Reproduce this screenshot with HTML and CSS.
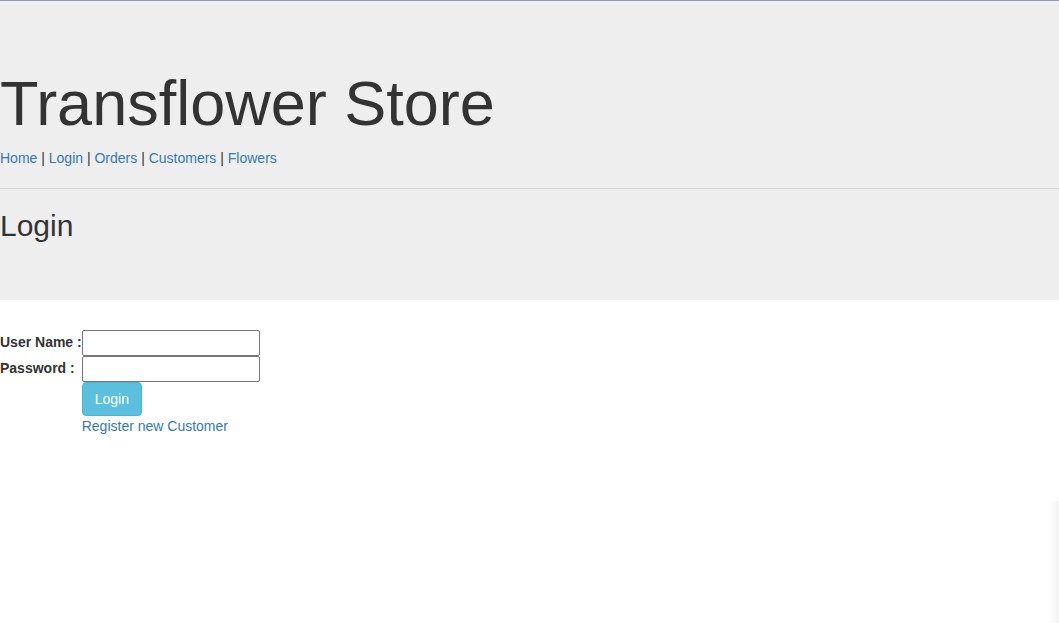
FILE: index.html
```html
<!DOCTYPE html>
<html>
<head>
<meta charset="utf-8">
<title>Transflower Store</title>
<link rel="stylesheet" href="styles.css">
</head>
<body>
<div class="jumbotron">
  <h1 class="title">Transflower Store</h1>
  <p class="nav">
    <a href="#">Home</a> | <a href="#">Login</a> | <a href="#">Orders</a> | <a href="#">Customers</a> | <a href="#">Flowers</a>
  </p>
  <hr class="rule">
  <h2 class="subtitle">Login</h2>
</div>
<form class="login-form">
  <table class="form-table">
    <tr>
      <td class="label">User Name :</td>
      <td><input class="field" type="text"></td>
    </tr>
    <tr>
      <td class="label">Password :</td>
      <td><input class="field" type="password"></td>
    </tr>
    <tr>
      <td></td>
      <td><button class="btn-login" type="button">Login</button></td>
    </tr>
    <tr>
      <td></td>
      <td class="link-cell"><a href="#">Register new Customer</a></td>
    </tr>
  </table>
</form>
<div class="edge-shadow"></div>
</body>
</html>
```
FILE: styles.css
```css
html, body {
  margin: 0;
  padding: 0;
}
body {
  font-family: "Liberation Sans", Arial, sans-serif;
  font-size: 14px;
  line-height: 1.42857143;
  color: #333;
  background: #fff;
  border-top: 1px solid #9599ad;
  min-height: 622px;
  position: relative;
  overflow: hidden;
}
a {
  color: #337ab7;
  text-decoration: none;
}
.jumbotron {
  background: #eee;
  padding: 48px 0;
  margin-bottom: 30px;
}
.title {
  font-size: 63px;
  font-weight: 500;
  line-height: 1.1;
  margin: 20px 0 10px;
  color: #333;
}
.nav {
  margin: 0;
}
.rule {
  border: 0;
  border-top: 1px solid #d5d5d5;
  margin: 20px 0;
  height: 0;
}
.subtitle {
  font-size: 30px;
  font-weight: 500;
  line-height: 1.1;
  margin: 20px 0 10px;
  color: #333;
}
.login-form {
  margin: 0;
}
.form-table {
  border-collapse: collapse;
  border-spacing: 0;
}
.form-table td {
  padding: 0;
  vertical-align: middle;
}
.form-table td.label {
  font-weight: bold;
  white-space: nowrap;
  vertical-align: top;
  padding-top: 2px;
}
.field {
  display: block;
  box-sizing: border-box;
  width: 178px;
  height: 26px;
  margin: 0;
  border: 1px solid #767676;
  border-radius: 2px;
  background: #fff;
  font: inherit;
  padding: 1px 2px;
}
.btn-login {
  display: block;
  box-sizing: border-box;
  height: 34px;
  padding: 6px 12px;
  font: inherit;
  line-height: 20px;
  color: #fff;
  background: #5bc0de;
  border: 1px solid #46b8da;
  border-radius: 4px;
  margin: 0;
}
.link-cell {
  line-height: 20px;
}
.edge-shadow {
  position: absolute;
  right: 0;
  top: 500px;
  width: 10px;
  height: 130px;
  background: linear-gradient(to right, rgba(0,0,0,0), rgba(0,0,0,0.05));
}
```
